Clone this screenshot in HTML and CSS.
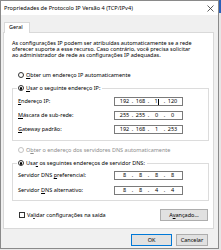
FILE: index.html
```html
<!DOCTYPE html>
<html lang="pt-BR">
<head>
<meta charset="utf-8">
<title>Propriedades de Protocolo IP Versão 4 (TCP/IPv4)</title>
<link rel="stylesheet" href="styles.css">
</head>
<body>
<div class="dialog">
  <div class="titlebar">
    <span class="title">Propriedades de Protocolo IP Versão 4 (TCP/IPv4)</span>
    <svg class="close" width="7" height="7" viewBox="0 0 7 7"><path d="M0.5 0.5 L6.5 6.5 M6.5 0.5 L0.5 6.5" stroke="#333" stroke-width="0.8" fill="none"/></svg>
  </div>
  <div class="tabs">
    <div class="tab">Geral</div>
  </div>
  <div class="panel">
    <p class="intro">As configurações IP podem ser atribuídas automaticamente se a rede<br>oferecer suporte a esse recurso. Caso contrário, você precisa solicitar<br>ao administrador de rede as configurações IP adequadas.</p>

    <div class="option first"><span class="radio"></span><span><u>O</u>bter um endereço IP automaticamente</span></div>

    <div class="group ip">
      <div class="option head"><span class="radio on"></span><span><u>U</u>sar o seguinte endereço IP:</span></div>
      <div class="row"><span class="lbl"><u>E</u>ndereço IP:</span>
        <span class="field"><span class="seg">192</span><span class="dot">.</span><span class="seg">168</span><span class="dot">.</span><span class="seg">1<i class="caret"></i></span><span class="dot">.</span><span class="seg">120</span></span></div>
      <div class="row"><span class="lbl"><u>M</u>áscara de sub-rede:</span>
        <span class="field"><span class="seg">255</span><span class="dot">.</span><span class="seg">255</span><span class="dot">.</span><span class="seg">0</span><span class="dot">.</span><span class="seg">0</span></span></div>
      <div class="row"><span class="lbl"><u>G</u>ateway padrão:</span>
        <span class="field"><span class="seg">192</span><span class="dot">.</span><span class="seg">168</span><span class="dot">.</span><span class="seg">1</span><span class="dot">.</span><span class="seg">253</span></span></div>
    </div>

    <div class="option disabled"><span class="radio off"></span><span>O<u>b</u>ter o endereço dos servidores DNS automaticamente</span></div>

    <div class="group dns">
      <div class="option head"><span class="radio on"></span><span>Usa<u>r</u> os seguintes endereços de servidor DNS:</span></div>
      <div class="row"><span class="lbl">Servidor DNS <u>p</u>referencial:</span>
        <span class="field"><span class="seg">8</span><span class="dot">.</span><span class="seg">8</span><span class="dot">.</span><span class="seg">8</span><span class="dot">.</span><span class="seg">8</span></span></div>
      <div class="row second"><span class="lbl">Servidor <u>D</u>NS alternativo:</span>
        <span class="field"><span class="seg">8</span><span class="dot">.</span><span class="seg">8</span><span class="dot">.</span><span class="seg">4</span><span class="dot">.</span><span class="seg">4</span></span></div>
    </div>

    <div class="bottomrow">
      <span class="check"></span><span class="checklbl">Va<u>l</u>idar configurações na saída</span>
      <button class="btn adv">A<u>v</u>ançado...</button>
    </div>
  </div>
  <div class="buttons">
    <button class="btn ok">OK</button>
    <button class="btn cancel">Cancelar</button>
  </div>
</div>
<div class="strip"><div class="blue"></div><div class="grey"></div></div>
</body>
</html>
```
FILE: styles.css
```css
html, body {
  margin: 0;
  padding: 0;
}
body {
  width: 221px;
  height: 250px;
  overflow: hidden;
  display: flex;
  background: #e8e8e8;
  font-family: "Noto Sans", "Open Sans", sans-serif;
  font-size: 5.5px;
  color: #000;
}
u { text-decoration: underline; text-decoration-thickness: 0.5px; text-underline-offset: 0.5px; }
.dialog {
  width: 219px;
  height: 249px;
  box-sizing: border-box;
  border: 1px solid #8a8a8a;
  background: #f0f0f0;
  display: flex;
  flex-direction: column;
}
.titlebar {
  height: 14px;
  flex: none;
  background: #fff;
  display: flex;
  align-items: center;
  padding-left: 3px;
  padding-right: 4px;
}
.title {
  flex: 1;
  white-space: nowrap;
  font-size: 5.6px;
}
.close { flex: none; }
.tabs {
  flex: none;
  padding: 7px 0 0 3px;
  display: flex;
}
.tab {
  position: relative;
  z-index: 1;
  width: 26px;
  height: 11px;
  box-sizing: border-box;
  border: 1px solid #d9d9d9;
  border-bottom: none;
  background: #fff;
  margin-bottom: -1px;
  padding-left: 4px;
  line-height: 9px;
}
.panel {
  flex: none;
  margin: 0 4px 0 2px;
  border: 1px solid #d9d9d9;
  background: #fff;
  padding: 8px 4px 7px 8px;
  display: flex;
  flex-direction: column;
}
.intro {
  margin: 0;
  line-height: 5.8px;
  white-space: nowrap;
}
.option {
  display: flex;
  align-items: center;
  height: 7px;
  white-space: nowrap;
}
.option.first { margin-top: 13px; margin-left: 6px; }
.option.disabled { margin-top: 5.5px; margin-left: 6px; color: #8d8d8d; }
.radio {
  width: 6px;
  height: 6px;
  box-sizing: border-box;
  border: 1px solid #333;
  border-radius: 50%;
  margin-right: 2px;
  display: flex;
  align-items: center;
  justify-content: center;
  flex: none;
  background: #fff;
}
.radio.on::after {
  content: "";
  width: 2.5px;
  height: 2.5px;
  border-radius: 50%;
  background: #000;
}
.radio.off { border-color: #c2c2c2; }
.group {
  border: 1px solid #dcdcdc;
  padding: 0 0 6px 5px;
  display: flex;
  flex-direction: column;
}
.group.ip { margin-top: 9.5px; }
.group.dns { margin-top: 9.5px; padding-bottom: 5px; }
.option.head {
  margin-top: -4px;
  margin-left: -1px;
  padding: 0 2px 0 1px;
  align-self: flex-start;
  background: #fff;
}
.row {
  display: flex;
  align-items: center;
  height: 9px;
  margin-top: 5px;
  white-space: nowrap;
}
.dns .row { margin-top: 4px; }
.dns .row.second { margin-top: 6px; }
.lbl { width: 96px; flex: none; }
.field {
  width: 69px;
  height: 9px;
  box-sizing: border-box;
  border: 1px solid #7a7a7a;
  background: #fff;
  display: flex;
  align-items: center;
  padding: 0 3px;
}
.seg { flex: 1; text-align: center; position: relative; }
.dot { flex: none; width: 3px; text-align: center; }
.caret {
  display: inline-block;
  width: 0.6px;
  height: 6px;
  background: #000;
  vertical-align: middle;
  margin-left: 0.5px;
}
.bottomrow {
  display: flex;
  align-items: center;
  margin-top: 8px;
  margin-right: 1px;
  white-space: nowrap;
}
.check {
  width: 6px;
  height: 6px;
  box-sizing: border-box;
  border: 1px solid #333;
  margin-left: 7px;
  margin-right: 2px;
  flex: none;
}
.checklbl { flex: 1; }
.btn {
  font: inherit;
  color: #000;
  height: 12px;
  box-sizing: border-box;
  border: 1px solid #adadad;
  background: #e1e1e1;
  padding: 0;
  margin: 0;
  line-height: 10px;
  flex: none;
}
.adv { width: 48px; }
.buttons {
  display: flex;
  justify-content: flex-end;
  gap: 4px;
  margin-top: 5px;
  padding-right: 10px;
}
.ok { width: 41px; border-color: #0078d7; }
.cancel { width: 32px; }
.strip {
  width: 2px;
  display: flex;
  flex-direction: column;
}
.blue { height: 13px; background: #2b5fb8; }
.grey { flex: 1; background: #e6e6e6; }
```
